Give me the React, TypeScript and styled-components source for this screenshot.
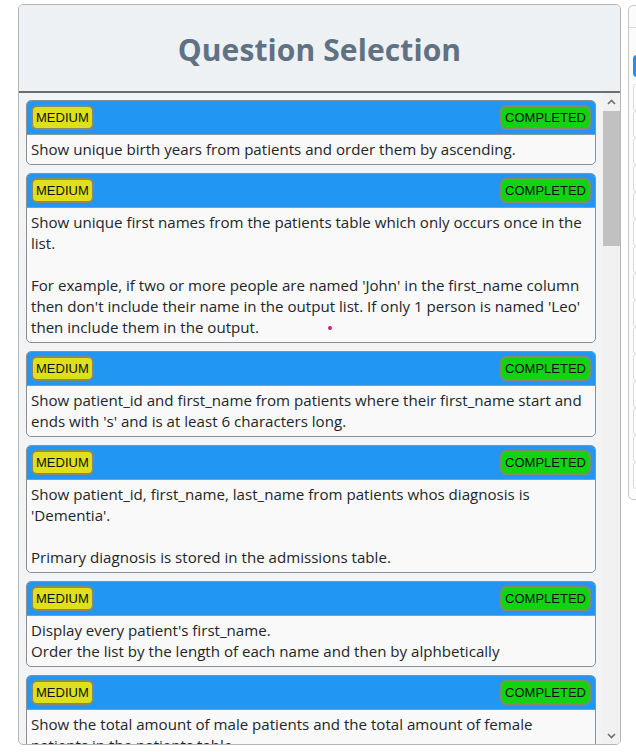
import React from "react";
import styled, { createGlobalStyle } from "styled-components";

const Global = createGlobalStyle`
  html, body { margin: 0; padding: 0; background: #ffffff; }
  body { font-family: "Open Sans", "Noto Sans", sans-serif; }
  * { box-sizing: border-box; }
`;

const Page = styled.div`
  display: flex;
  gap: 7px;
  padding: 4px 0 0 18px;
  height: 752px;
  width: 636px;
  overflow: hidden;
`;

const Panel = styled.div`
  flex: 0 0 603px;
  height: 741px;
  border: 1px solid #b4b7ba;
  border-radius: 5px;
  display: flex;
  flex-direction: column;
  overflow: hidden;
  background: #f1f3f5;
`;

const Header = styled.div`
  height: 88px;
  flex: 0 0 88px;
  background: #eef1f4;
  border-bottom: 2px solid #6b6e70;
  display: flex;
  align-items: center;
  justify-content: center;
  padding-top: 2px;
`;

const Title = styled.h1`
  margin: 0;
  font-family: "Open Sans", "Noto Sans", sans-serif;
  font-weight: 700;
  font-size: 30px;
  color: #5f7183;
  letter-spacing: 0.1px;
`;

const Body = styled.div`
  flex: 1;
  min-height: 0;
  display: flex;
`;

const List = styled.div`
  flex: 1;
  overflow: hidden;
  padding: 7px 7px 0 7px;
  display: flex;
  flex-direction: column;
  gap: 8px;
`;

const Card = styled.div`
  position: relative;
  flex: 0 0 auto;
  border: 1px solid #8d8f91;
  border-radius: 5px;
  background: #f9f9f9;
  overflow: hidden;
`;

const CardHead = styled.div`
  display: flex;
  justify-content: space-between;
  align-items: center;
  height: 34px;
  background: #2196f3;
  padding: 0 4px;
  border-bottom: 1px solid #8d9aa5;
`;

const Badge = styled.span<{ $bg: string }>`
  display: inline-flex;
  align-items: center;
  height: 25px;
  padding: 0 3px;
  border: 2px solid #858a6f;
  border-radius: 6px;
  background: ${(p) => p.$bg};
  color: #111;
  font-family: "Liberation Sans", Arial, sans-serif;
  font-size: 13px;
  line-height: 1;
`;

const Text = styled.div`
  padding: 4px 5px 4px 4px;
  font-size: 15.1px;
  line-height: 21px;
  color: #212529;
  white-space: pre-line;
`;

const Dot = styled.span`
  position: absolute;
  left: 301px;
  bottom: 12px;
  width: 4px;
  height: 4px;
  border-radius: 50%;
  background: #c3236e;
`;

const Scrollbar = styled.div`
  flex: 0 0 17px;
  display: flex;
  flex-direction: column;
  background: #f1f1f1;
`;

const Arrow = styled.div`
  height: 17px;
  flex: 0 0 17px;
  display: flex;
  align-items: center;
  justify-content: center;
`;

const Track = styled.div`
  flex: 1;
  padding-top: 1px;
`;

const Thumb = styled.div`
  height: 135px;
  background: #c1c1c1;
`;

const SidePanel = styled.div`
  flex: 0 0 200px;
  height: 495px;
  margin-top: 1px;
  border: 1px solid #c4c6c8;
  border-radius: 5px;
  background: #fbfbfb;
  display: flex;
  flex-direction: column;
  padding: 0 0 8px 4px;
`;

const SideHead = styled.div`
  height: 22px;
  border-bottom: 1px solid #d9dbdd;
  margin-left: -4px;
`;

const SideButton = styled.div`
  margin-top: 27px;
  height: 22px;
  background: #2a8ce6;
  border-radius: 4px 0 0 4px;
`;

const SideRow = styled.div`
  height: 27px;
  border: 1px solid #d8dadc;
  border-radius: 3px;
  background: #ffffff;
`;

const SideList = styled.div`
  margin-top: 7px;
  display: flex;
  flex-direction: column;
  flex: 1;
  overflow: hidden;
`;

type Q = { text: string; dot?: boolean };

const questions: Q[] = [
  { text: "Show unique birth years from patients and order them by ascending." },
  {
    text:
      "Show unique first names from the patients table which only occurs once in the list.\n\nFor example, if two or more people are named 'John' in the first_name column then don't include their name in the output list. If only 1 person is named 'Leo' then include them in the output.",
    dot: true,
  },
  {
    text:
      "Show patient_id and first_name from patients where their first_name start and ends with 's' and is at least 6 characters long.",
  },
  {
    text:
      "Show patient_id, first_name, last_name from patients whos diagnosis is 'Dementia'.\n\nPrimary diagnosis is stored in the admissions table.",
  },
  {
    text:
      "Display every patient's first_name.\nOrder the list by the length of each name and then by alphbetically",
  },
  {
    text:
      "Show the total amount of male patients and the total amount of female patients in the patients table.\nDisplay the two results in the same row.",
  },
];

const Chevron = ({ up }: { up?: boolean }) => (
  <svg width="9" height="6" viewBox="0 0 9 6">
    <path
      d={up ? "M1 5 L4.5 1.5 L8 5" : "M1 1 L4.5 4.5 L8 1"}
      fill="none"
      stroke="#6e6e6e"
      strokeWidth="1.6"
    />
  </svg>
);

export default function App() {
  return (
    <>
      <Global />
      <Page>
        <Panel>
          <Header>
            <Title>Question Selection</Title>
          </Header>
          <Body>
            <List>
              {questions.map((q, i) => (
                <Card key={i}>
                  <CardHead>
                    <Badge $bg="#dfe01c">MEDIUM</Badge>
                    <Badge $bg="#12d312">COMPLETED</Badge>
                  </CardHead>
                  <Text>{q.text}</Text>
                  {q.dot && <Dot />}
                </Card>
              ))}
            </List>
            <Scrollbar>
              <Arrow>
                <Chevron up />
              </Arrow>
              <Track>
                <Thumb />
              </Track>
              <Arrow>
                <Chevron />
              </Arrow>
            </Scrollbar>
          </Body>
        </Panel>
        <SidePanel>
          <SideHead />
          <SideButton />
          <SideList>
            {Array.from({ length: 15 }).map((_, i) => (
              <SideRow key={i} />
            ))}
          </SideList>
        </SidePanel>
      </Page>
    </>
  );
}
